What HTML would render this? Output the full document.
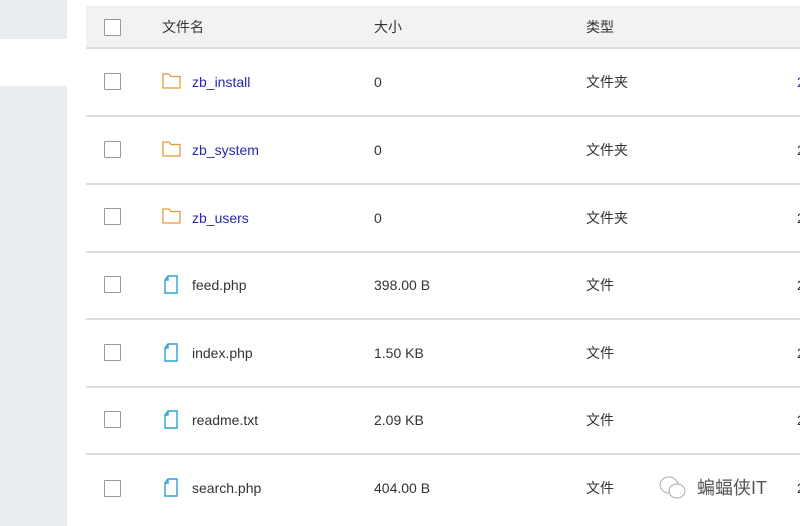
<!DOCTYPE html><html><head><meta charset="utf-8"><style>
body{margin:0;width:800px;height:526px;overflow:hidden;background:#fff;font-family:"Liberation Sans","Noto Sans CJK SC",sans-serif;font-size:14px;color:#333;position:relative}
.sb1{position:absolute;left:0;top:0;width:67px;height:39px;background:#e9edf2}
.sb2{position:absolute;left:0;top:86px;width:67px;height:440px;background:#e9edf2}
.hd{position:absolute;left:86px;top:6px;width:714px;height:41px;background:#f2f2f2;border-bottom:2px solid #ddd}
.row{position:absolute;left:86px;width:714px;height:66px;border-bottom:2px solid #ddd}
.cb{position:absolute;left:18px;width:15px;height:15px;border:1px solid #999;background:#fff;border-radius:1px}
.t{position:absolute;white-space:nowrap;line-height:20px;height:20px}
.t span,.r span{display:inline-block}
a{color:#2929a8;text-decoration:none}
.r .t{top:23px}
</style></head><body>
<div class="sb1"></div><div class="sb2"></div>
<div class="hd"><div class="cb" style="top:13px"></div>
<span class="t" style="left:76px;top:11px">文件名</span><span class="t" style="left:288px;top:11px">大小</span><span class="t" style="left:500px;top:11px">类型</span></div>
<div class="row r" style="top:49px"><div class="cb" style="top:24px"></div><svg style="position:absolute;left:76px;top:24px" width="19" height="16"><path d="M1 1H7L9 3.5H18V15H1Z" fill="none" stroke="#e39a3a" stroke-width="1.3"/></svg><a class="t" style="left:106px">zb_install</a><span class="t" style="left:288px">0</span><span class="t" style="left:500px">文件夹</span><span class="t" style="left:711px;color:#33c">2</span></div>
<div class="row r" style="top:117px"><div class="cb" style="top:24px"></div><svg style="position:absolute;left:76px;top:24px" width="19" height="16"><path d="M1 1H7L9 3.5H18V15H1Z" fill="none" stroke="#e39a3a" stroke-width="1.3"/></svg><a class="t" style="left:106px">zb_system</a><span class="t" style="left:288px">0</span><span class="t" style="left:500px">文件夹</span><span class="t" style="left:711px">2</span></div>
<div class="row r" style="top:185px"><div class="cb" style="top:23px"></div><svg style="position:absolute;left:76px;top:23px" width="19" height="16"><path d="M1 1H7L9 3.5H18V15H1Z" fill="none" stroke="#e39a3a" stroke-width="1.3"/></svg><a class="t" style="left:106px">zb_users</a><span class="t" style="left:288px">0</span><span class="t" style="left:500px">文件夹</span><span class="t" style="left:711px">2</span></div>
<div class="row r" style="top:252px"><div class="cb" style="top:24px"></div><svg style="position:absolute;left:77px;top:23px" width="16" height="19"><path d="M5 1H14V18H2V5Z M2 5H5V1" fill="none" stroke="#2aa3d6" stroke-width="1.4"/></svg><span class="t" style="left:106px">feed.php</span><span class="t" style="left:288px">398.00 B</span><span class="t" style="left:500px">文件</span><span class="t" style="left:711px">2</span></div>
<div class="row r" style="top:320px"><div class="cb" style="top:24px"></div><svg style="position:absolute;left:77px;top:23px" width="16" height="19"><path d="M5 1H14V18H2V5Z M2 5H5V1" fill="none" stroke="#2aa3d6" stroke-width="1.4"/></svg><span class="t" style="left:106px">index.php</span><span class="t" style="left:288px">1.50 KB</span><span class="t" style="left:500px">文件</span><span class="t" style="left:711px">2</span></div>
<div class="row r" style="top:387px"><div class="cb" style="top:24px"></div><svg style="position:absolute;left:77px;top:23px" width="16" height="19"><path d="M5 1H14V18H2V5Z M2 5H5V1" fill="none" stroke="#2aa3d6" stroke-width="1.4"/></svg><span class="t" style="left:106px">readme.txt</span><span class="t" style="left:288px">2.09 KB</span><span class="t" style="left:500px">文件</span><span class="t" style="left:711px">2</span></div>
<div class="row r" style="top:455px;border:none"><div class="cb" style="top:25px"></div><svg style="position:absolute;left:77px;top:23px" width="16" height="19"><path d="M5 1H14V18H2V5Z M2 5H5V1" fill="none" stroke="#2aa3d6" stroke-width="1.4"/></svg><span class="t" style="left:106px">search.php</span><span class="t" style="left:288px">404.00 B</span><span class="t" style="left:500px">文件</span><span class="t" style="left:711px">2</span></div>
<svg style="position:absolute;left:659px;top:475px" width="32" height="26"><ellipse cx="10" cy="10" rx="9" ry="8" fill="#fff" stroke="#aaa"/><ellipse cx="18" cy="16" rx="8" ry="7" fill="#fff" stroke="#aaa"/></svg>
<span class="t" style="left:697px;top:477px;font-size:18px;line-height:22px;color:#555">蝙蝠侠IT</span>
</body></html>
